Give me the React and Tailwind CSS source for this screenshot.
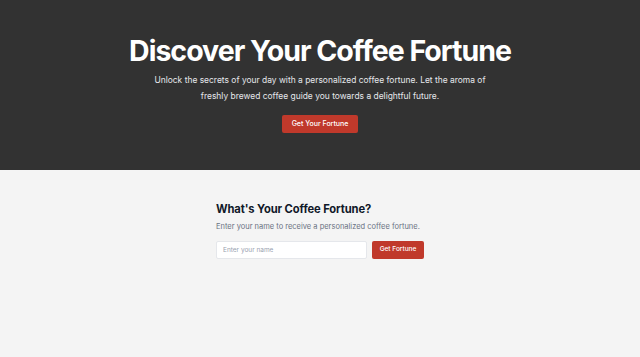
export default function App() {
  return (
    <div className="min-h-screen bg-[#f4f4f4] font-['Inter',sans-serif]">
      <section className="bg-[#323232] h-[170px] pt-[36px] text-center">
        <h1 className="text-[28.5px] leading-[30px] font-bold text-white tracking-[-1px]">
          Discover Your Coffee Fortune
        </h1>
        <p className="mt-[6px] text-[8.45px] leading-[16px] text-gray-200 max-w-[340px] mx-auto">
          Unlock the secrets of your day with a personalized coffee fortune. Let the aroma of freshly brewed coffee guide you towards a delightful future.
        </p>
        <button className="mt-[11px] h-[18px] w-[76px] rounded-[2px] bg-[#c0392b] text-white text-[7px] font-medium">
          Get Your Fortune
        </button>
      </section>

      <main className="max-w-[208px] mx-auto pt-[31px]">
        <h2 className="text-[11.2px] leading-[16px] font-bold text-gray-900 tracking-[-0.1px]">What's Your Coffee Fortune?</h2>
        <p className="mt-[4px] text-[7.5px] leading-[12px] text-gray-500">
          Enter your name to receive a personalized coffee fortune.
        </p>
        <div className="mt-[8px] flex gap-[5px]">
          <input
            placeholder="Enter your name"
            className="flex-1 min-w-0 h-[18px] bg-white border border-gray-200 rounded-[2px] px-[6px] text-[6.5px] placeholder:text-gray-400 outline-none"
          />
          <button className="h-[18px] w-[52px] rounded-[2px] bg-[#c0392b] text-white text-[6.5px] font-medium">
            Get Fortune
          </button>
        </div>
      </main>
    </div>
  )
}
